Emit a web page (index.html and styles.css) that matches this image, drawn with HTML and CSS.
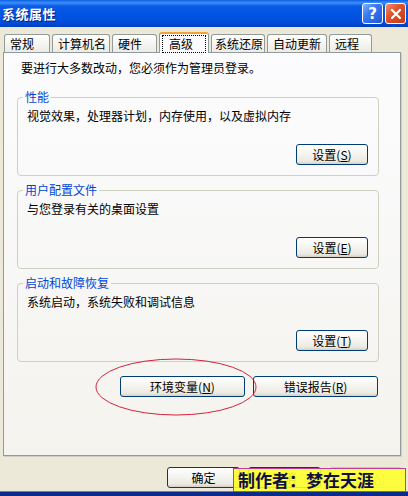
FILE: index.html
```html
<!DOCTYPE html>
<html lang="zh-CN">
<head>
  <meta charset="UTF-8">
  <title>系统属性</title>
  <link rel="stylesheet" href="styles.css">
</head>
<body>

  <!-- Title bar -->
  <div class="titlebar">
    <span class="title">系统属性</span>
    <div class="caption-btns">
      <span class="cap-btn help">?</span>
      <span class="cap-btn close">
        <svg width="12" height="12" viewBox="0 0 12 12"><path d="M2 2 L10 10 M10 2 L2 10" stroke="#fff" stroke-width="2.2" stroke-linecap="round"/></svg>
      </span>
    </div>
  </div>

  <!-- Tabs -->
  <div class="tabs">
    <div class="tab w46">常规</div>
    <div class="tab w58">计算机名</div>
    <div class="tab w45">硬件</div>
    <div class="tab active"><span class="focus">高级</span></div>
    <div class="tab w54">系统还原</div>
    <div class="tab w60">自动更新</div>
    <div class="tab w43">远程</div>
  </div>

  <!-- Tab page -->
  <div class="panel">
    <p class="intro">要进行大多数改动，您必须作为管理员登录。</p>

    <fieldset class="group first">
      <legend>性能</legend>
      <p>视觉效果，处理器计划，内存使用，以及虚拟内存</p>
      <div class="row"><button class="btn">设置(<u>S</u>)</button></div>
    </fieldset>

    <fieldset class="group">
      <legend>用户配置文件</legend>
      <p>与您登录有关的桌面设置</p>
      <div class="row"><button class="btn">设置(<u>E</u>)</button></div>
    </fieldset>

    <fieldset class="group">
      <legend>启动和故障恢复</legend>
      <p>系统启动，系统失败和调试信息</p>
      <div class="row"><button class="btn">设置(<u>T</u>)</button></div>
    </fieldset>

    <div class="row extra">
      <button class="btn wide">环境变量(<u>N</u>)</button>
      <button class="btn wide">错误报告(<u>R</u>)</button>
    </div>
  </div>

  <!-- Dialog buttons -->
  <div class="row dialog">
    <button class="btn dlg">确定</button>
    <button class="btn dlg">取消</button>
    <button class="btn dlg disabled">应用(<u>A</u>)</button>
  </div>

  <div class="frame-bottom"></div>

  <!-- annotations drawn over the screenshot -->
  <svg class="ring" width="164" height="60" viewBox="0 0 164 60">
    <ellipse cx="81" cy="29" rx="80" ry="28" fill="none" stroke="#d3243c" stroke-width="1"/>
  </svg>
  <div class="stamp">制作者：梦在天涯</div>

</body>
</html>
```

FILE: styles.css
```css
body {
  margin: 0;
  width: 408px;
  height: 496px;
  overflow: hidden;
  position: relative;
  display: flex;
  flex-direction: column;
  background-color: #ece9d8;
  font-family: "Noto Sans CJK SC", sans-serif;
  font-size: 12px;
  line-height: 14px;
  color: #000;
}
p {
  margin: 0;
}

/* title bar */
.titlebar {
  height: 27px;
  display: flex;
  align-items: center;
  justify-content: space-between;
  padding: 0 2px 0 2px;
  background: linear-gradient(#0a5fe0 0, #3d8ef8 10%, #0b5ce6 22%, #0054e3 55%, #004cd8 85%, #0040c0 100%);
}
.title {
  color: #fff;
  font-weight: bold;
  font-size: 13px;
  letter-spacing: 0.5px;
  text-shadow: 1px 1px 0 #0a1e78;
}
.caption-btns {
  display: flex;
  gap: 2px;
}
.cap-btn {
  width: 19px;
  height: 19px;
  border: 1px solid #fff;
  border-radius: 3px;
  display: flex;
  align-items: center;
  justify-content: center;
  color: #fff;
  font-family: "DejaVu Sans", sans-serif;
  font-weight: bold;
  font-size: 15px;
}
.help {
  background: linear-gradient(135deg, #7fb0ff 0, #3a78f0 40%, #2058d8 100%);
}
.close {
  background: linear-gradient(135deg, #f09070 0, #e0542e 40%, #c23a16 100%);
}

/* tabs */
.tabs {
  display: flex;
  align-items: flex-end;
  height: 20px;
  margin-top: 5px;
  padding-left: 4px;
  gap: 2px;
  position: relative;
  z-index: 1;
}
.tab {
  padding-left: 5px;
  box-sizing: border-box;
  height: 18px;
  line-height: 17px;
  white-space: nowrap;
  border: 1px solid #919b9c;
  border-bottom: none;
  border-radius: 3px 3px 0 0;
  background: linear-gradient(#ffffff, #ecebe5);
}
.w46 { width: 46px; }
.w58 { width: 58px; }
.w45 { width: 45px; }
.w54 { width: 54px; padding-left: 3px; }
.w60 { width: 60px; }
.w43 { width: 43px; }
.tab.active {
  width: 50px;
  height: 21px;
  padding: 1px 2px 0 2px;
  border-top: 2px solid #f3a13a;
  background: #fcfcfe;
  margin-bottom: -1px;
}
.focus {
  display: block;
  height: 16px;
  line-height: 16px;
  padding-left: 6px;
  border: 1px dotted #000;
}

/* page */
.panel {
  margin-left: 3px;
  width: 398px;
  height: 404px;
  box-sizing: border-box;
  border: 1px solid #919b9c;
  padding: 8px 21px 0 13px;
  background: linear-gradient(#fcfcfe, #f4f3ee);
  box-shadow: 1px 1px 0 #d0cfc6;
}
.intro {
  padding-left: 4px;
}
.group {
  margin: 7px 0 0 0;
  padding: 0 10px 10px 9px;
  border: 1px solid #d0d0bf;
  border-radius: 4px;
}
.group.first {
  margin-top: 15px;
}
.group legend {
  margin-left: -4px;
  padding: 0 2px;
  color: #0046d5;
}
.group p {
  margin-top: 5px;
}
.row {
  display: flex;
  justify-content: flex-end;
  gap: 8px;
}
.group .row {
  margin-top: 21px;
}
.extra {
  margin-top: 14px;
  margin-right: 1px;
}

/* buttons */
.btn {
  width: 72px;
  height: 21px;
  padding: 0;
  font-family: inherit;
  font-size: 12px;
  color: #000;
  border: 1px solid #003c74;
  border-radius: 3px;
  background: linear-gradient(#ffffff 0, #f4f3ef 50%, #ebe9e1 85%, #d6d0c5 100%);
}
.btn.wide {
  width: 125px;
}
.dialog {
  margin-top: 11px;
  padding-right: 6px;
}
.btn.dlg {
  width: 73px;
}
.btn.disabled {
  color: #aca899;
  border-color: #c9c7ba;
}

.frame-bottom {
  margin-top: auto;
  height: 4px;
  border-top: 1px solid #5a7edc;
  background: #0a2a8c;
}

/* overlays */
.ring {
  position: absolute;
  left: 95px;
  top: 358px;
}
.stamp {
  position: absolute;
  left: 233px;
  top: 468px;
  width: 173px;
  height: 24px;
  box-sizing: border-box;
  border: 1px solid #c03c9c;
  background: rgba(255, 255, 40, 0.88);
  padding-left: 4px;
  font-size: 17px;
  line-height: 22px;
  font-weight: bold;
  white-space: nowrap;
  color: #101040;
}
```
